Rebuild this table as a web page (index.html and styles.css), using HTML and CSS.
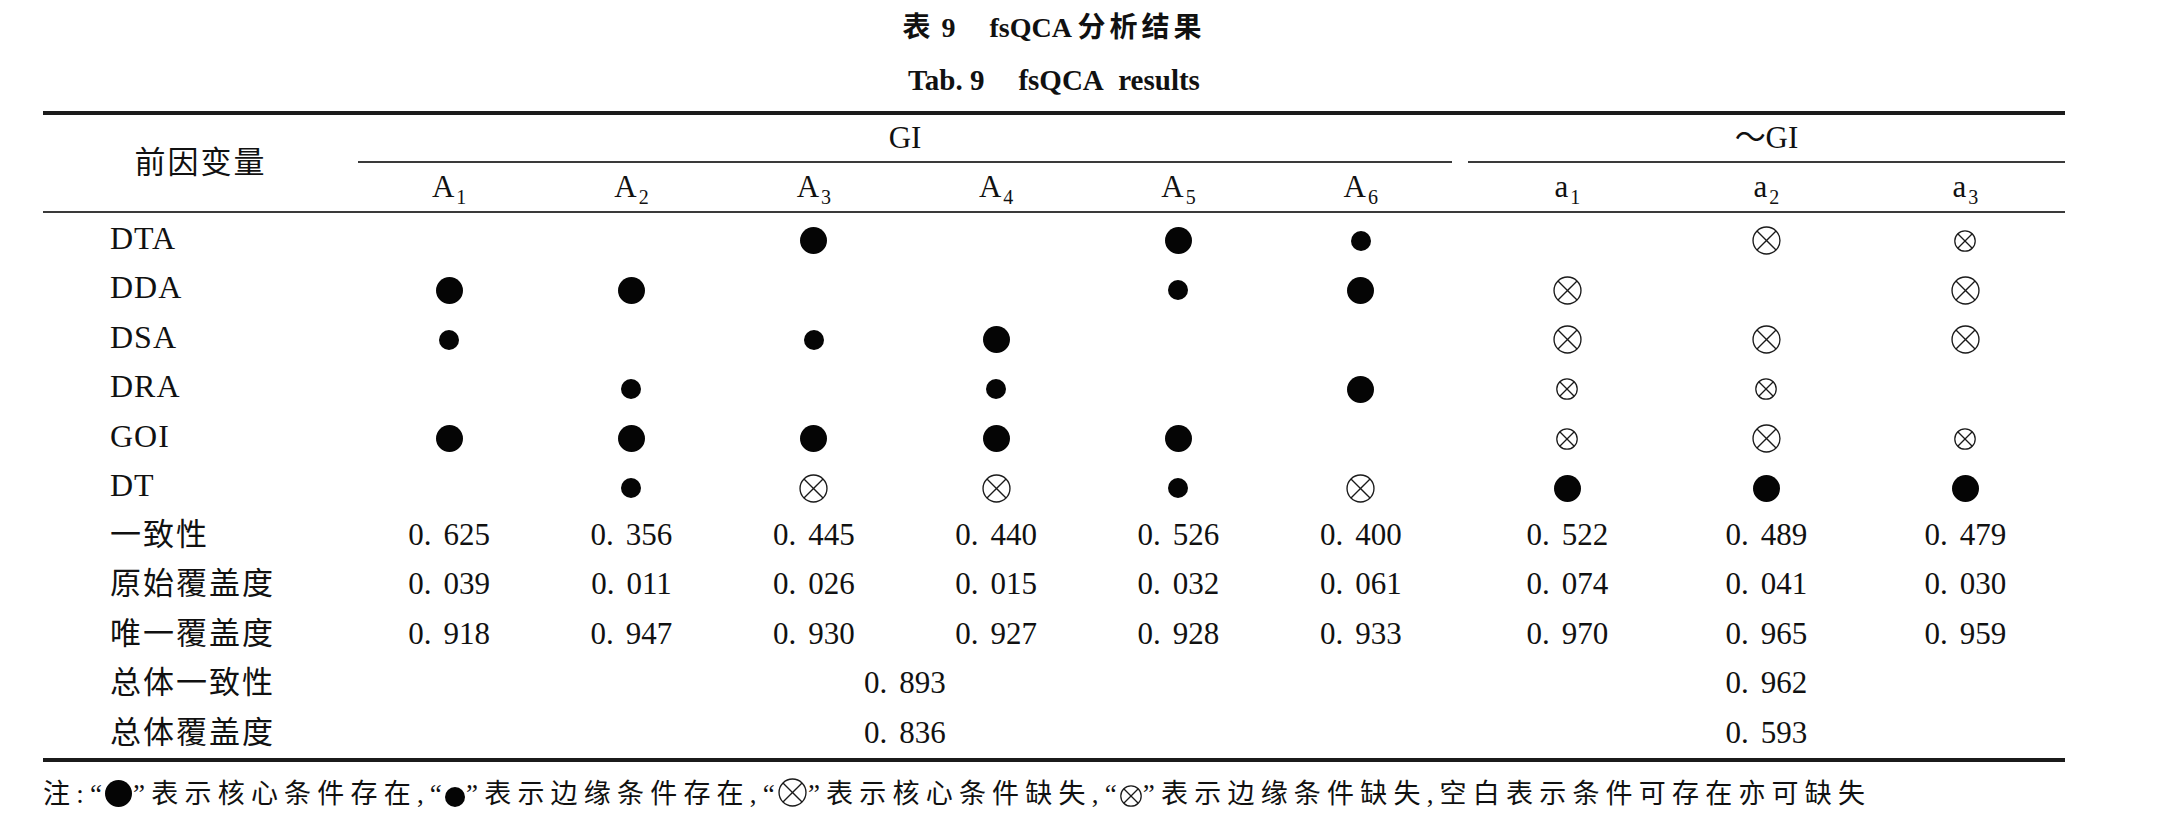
FILE: index.html
```html
<!DOCTYPE html>
<html lang="zh-CN">
<head>
<meta charset="utf-8">
<title>表 9 fsQCA 分析结果</title>
<link rel="stylesheet" href="styles.css">
</head>
<body>
<div class="page">
  <div class="caption">
    <div class="title-cn"><span class="t-cjk">表</span> 9<span class="t-gap"></span>fsQCA <span class="t-cjk">分析结果</span></div>
    <div class="title-en">Tab. 9<span class="t-gap"></span>fsQCA&nbsp; results</div>
  </div>

  <table class="qca">
    <colgroup>
      <col class="c-label">
      <col class="c-gi"><col class="c-gi"><col class="c-gi"><col class="c-gi"><col class="c-gi"><col class="c-gi">
      <col class="c-sep">
      <col class="c-ngi"><col class="c-ngi"><col class="c-ngi">
    </colgroup>
    <thead>
      <tr class="h1">
        <th rowspan="2" class="var">前因变量</th>
        <th colspan="6" class="grp">GI</th>
        <th class="sep"></th>
        <th colspan="3" class="grp">～GI</th>
      </tr>
      <tr class="h2">
        <th>A<sub>1</sub></th><th>A<sub>2</sub></th><th>A<sub>3</sub></th><th>A<sub>4</sub></th><th>A<sub>5</sub></th><th>A<sub>6</sub></th>
        <th class="sep"></th>
        <th>a<sub>1</sub></th><th>a<sub>2</sub></th><th>a<sub>3</sub></th>
      </tr>
    </thead>
    <tbody>
      <tr>
        <td class="lbl lat">DTA</td>
        <td></td><td></td><td><span class="dot dot-l"></span></td><td></td><td><span class="dot dot-l"></span></td><td><span class="dot dot-s"></span></td>
        <td class="sep"></td>
        <td></td>
        <td><svg class="ox ox-l" viewBox="0 0 28 28"><circle cx="14" cy="14" r="13"/><line x1="4.8" y1="4.8" x2="23.2" y2="23.2"/><line x1="23.2" y1="4.8" x2="4.8" y2="23.2"/></svg></td>
        <td><svg class="ox ox-s" viewBox="0 0 28 28"><circle cx="14" cy="14" r="13"/><line x1="4.8" y1="4.8" x2="23.2" y2="23.2"/><line x1="23.2" y1="4.8" x2="4.8" y2="23.2"/></svg></td>
      </tr>
      <tr>
        <td class="lbl lat">DDA</td>
        <td><span class="dot dot-l"></span></td><td><span class="dot dot-l"></span></td><td></td><td></td><td><span class="dot dot-s"></span></td><td><span class="dot dot-l"></span></td>
        <td class="sep"></td>
        <td><svg class="ox ox-l" viewBox="0 0 28 28"><circle cx="14" cy="14" r="13"/><line x1="4.8" y1="4.8" x2="23.2" y2="23.2"/><line x1="23.2" y1="4.8" x2="4.8" y2="23.2"/></svg></td>
        <td></td>
        <td><svg class="ox ox-l" viewBox="0 0 28 28"><circle cx="14" cy="14" r="13"/><line x1="4.8" y1="4.8" x2="23.2" y2="23.2"/><line x1="23.2" y1="4.8" x2="4.8" y2="23.2"/></svg></td>
      </tr>
      <tr>
        <td class="lbl lat">DSA</td>
        <td><span class="dot dot-s"></span></td><td></td><td><span class="dot dot-s"></span></td><td><span class="dot dot-l"></span></td><td></td><td></td>
        <td class="sep"></td>
        <td><svg class="ox ox-l" viewBox="0 0 28 28"><circle cx="14" cy="14" r="13"/><line x1="4.8" y1="4.8" x2="23.2" y2="23.2"/><line x1="23.2" y1="4.8" x2="4.8" y2="23.2"/></svg></td>
        <td><svg class="ox ox-l" viewBox="0 0 28 28"><circle cx="14" cy="14" r="13"/><line x1="4.8" y1="4.8" x2="23.2" y2="23.2"/><line x1="23.2" y1="4.8" x2="4.8" y2="23.2"/></svg></td>
        <td><svg class="ox ox-l" viewBox="0 0 28 28"><circle cx="14" cy="14" r="13"/><line x1="4.8" y1="4.8" x2="23.2" y2="23.2"/><line x1="23.2" y1="4.8" x2="4.8" y2="23.2"/></svg></td>
      </tr>
      <tr>
        <td class="lbl lat">DRA</td>
        <td></td><td><span class="dot dot-s"></span></td><td></td><td><span class="dot dot-s"></span></td><td></td><td><span class="dot dot-l"></span></td>
        <td class="sep"></td>
        <td><svg class="ox ox-s" viewBox="0 0 28 28"><circle cx="14" cy="14" r="13"/><line x1="4.8" y1="4.8" x2="23.2" y2="23.2"/><line x1="23.2" y1="4.8" x2="4.8" y2="23.2"/></svg></td>
        <td><svg class="ox ox-s" viewBox="0 0 28 28"><circle cx="14" cy="14" r="13"/><line x1="4.8" y1="4.8" x2="23.2" y2="23.2"/><line x1="23.2" y1="4.8" x2="4.8" y2="23.2"/></svg></td>
        <td></td>
      </tr>
      <tr>
        <td class="lbl lat">GOI</td>
        <td><span class="dot dot-l"></span></td><td><span class="dot dot-l"></span></td><td><span class="dot dot-l"></span></td><td><span class="dot dot-l"></span></td><td><span class="dot dot-l"></span></td><td></td>
        <td class="sep"></td>
        <td><svg class="ox ox-s" viewBox="0 0 28 28"><circle cx="14" cy="14" r="13"/><line x1="4.8" y1="4.8" x2="23.2" y2="23.2"/><line x1="23.2" y1="4.8" x2="4.8" y2="23.2"/></svg></td>
        <td><svg class="ox ox-l" viewBox="0 0 28 28"><circle cx="14" cy="14" r="13"/><line x1="4.8" y1="4.8" x2="23.2" y2="23.2"/><line x1="23.2" y1="4.8" x2="4.8" y2="23.2"/></svg></td>
        <td><svg class="ox ox-s" viewBox="0 0 28 28"><circle cx="14" cy="14" r="13"/><line x1="4.8" y1="4.8" x2="23.2" y2="23.2"/><line x1="23.2" y1="4.8" x2="4.8" y2="23.2"/></svg></td>
      </tr>
      <tr>
        <td class="lbl lat">DT</td>
        <td></td><td><span class="dot dot-s"></span></td>
        <td><svg class="ox ox-l" viewBox="0 0 28 28"><circle cx="14" cy="14" r="13"/><line x1="4.8" y1="4.8" x2="23.2" y2="23.2"/><line x1="23.2" y1="4.8" x2="4.8" y2="23.2"/></svg></td>
        <td><svg class="ox ox-l" viewBox="0 0 28 28"><circle cx="14" cy="14" r="13"/><line x1="4.8" y1="4.8" x2="23.2" y2="23.2"/><line x1="23.2" y1="4.8" x2="4.8" y2="23.2"/></svg></td>
        <td><span class="dot dot-s"></span></td>
        <td><svg class="ox ox-l" viewBox="0 0 28 28"><circle cx="14" cy="14" r="13"/><line x1="4.8" y1="4.8" x2="23.2" y2="23.2"/><line x1="23.2" y1="4.8" x2="4.8" y2="23.2"/></svg></td>
        <td class="sep"></td>
        <td><span class="dot dot-l"></span></td><td><span class="dot dot-l"></span></td><td><span class="dot dot-l"></span></td>
      </tr>
      <tr class="num">
        <td class="lbl">一致性</td>
        <td>0<span class="pt">.</span>625</td><td>0<span class="pt">.</span>356</td><td>0<span class="pt">.</span>445</td><td>0<span class="pt">.</span>440</td><td>0<span class="pt">.</span>526</td><td>0<span class="pt">.</span>400</td>
        <td class="sep"></td>
        <td>0<span class="pt">.</span>522</td><td>0<span class="pt">.</span>489</td><td>0<span class="pt">.</span>479</td>
      </tr>
      <tr class="num">
        <td class="lbl">原始覆盖度</td>
        <td>0<span class="pt">.</span>039</td><td>0<span class="pt">.</span>011</td><td>0<span class="pt">.</span>026</td><td>0<span class="pt">.</span>015</td><td>0<span class="pt">.</span>032</td><td>0<span class="pt">.</span>061</td>
        <td class="sep"></td>
        <td>0<span class="pt">.</span>074</td><td>0<span class="pt">.</span>041</td><td>0<span class="pt">.</span>030</td>
      </tr>
      <tr class="num">
        <td class="lbl">唯一覆盖度</td>
        <td>0<span class="pt">.</span>918</td><td>0<span class="pt">.</span>947</td><td>0<span class="pt">.</span>930</td><td>0<span class="pt">.</span>927</td><td>0<span class="pt">.</span>928</td><td>0<span class="pt">.</span>933</td>
        <td class="sep"></td>
        <td>0<span class="pt">.</span>970</td><td>0<span class="pt">.</span>965</td><td>0<span class="pt">.</span>959</td>
      </tr>
      <tr class="num">
        <td class="lbl">总体一致性</td>
        <td colspan="6">0<span class="pt">.</span>893</td>
        <td class="sep"></td>
        <td colspan="3">0<span class="pt">.</span>962</td>
      </tr>
      <tr class="num">
        <td class="lbl">总体覆盖度</td>
        <td colspan="6">0<span class="pt">.</span>836</td>
        <td class="sep"></td>
        <td colspan="3">0<span class="pt">.</span>593</td>
      </tr>
    </tbody>
  </table>

  <p class="note">注:“<span class="dot dot-l"></span>”表示核心条件存在,“<span class="dot dot-s"></span>”表示边缘条件存在,“<svg class="ox ox-l" viewBox="0 0 28 28"><circle cx="14" cy="14" r="13"/><line x1="4.8" y1="4.8" x2="23.2" y2="23.2"/><line x1="23.2" y1="4.8" x2="4.8" y2="23.2"/></svg>”表示核心条件缺失,“<svg class="ox ox-s" viewBox="0 0 28 28"><circle cx="14" cy="14" r="13"/><line x1="4.8" y1="4.8" x2="23.2" y2="23.2"/><line x1="23.2" y1="4.8" x2="4.8" y2="23.2"/></svg>”表示边缘条件缺失,空白表示条件可存在亦可缺失</p>
</div>
</body>
</html>
```

FILE: styles.css
```css
* {
  box-sizing: border-box;
}

html,
body {
  margin: 0;
  padding: 0;
  background: #ffffff;
}

body {
  color: #111111;
  font-family: "Liberation Serif", "Noto Sans CJK SC", serif;
}

.page {
  width: 2164px;
  padding-left: 43px;
}

/* ---------- caption ---------- */
.caption {
  width: 2022px;
  padding-top: 8px;
  margin-bottom: 11px;
  text-align: center;
  font-weight: 700;
}

.title-cn {
  font-size: 28px;
  line-height: 40px;
  height: 40px;
}

.title-cn .t-cjk {
  letter-spacing: 4px;
}

.title-en {
  margin-top: 12px;
  font-size: 29px;
  line-height: 40px;
  height: 40px;
}

.t-gap {
  display: inline-block;
  width: 34px;
}

/* ---------- table ---------- */
.qca {
  width: 2022px;
  table-layout: fixed;
  border-collapse: separate;
  border-spacing: 0;
  border-top: 4px solid #1b1b1b;
  border-bottom: 4px solid #1b1b1b;
  font-size: 31px;
  line-height: 36px;
}

col.c-label { width: 315px; }
col.c-gi { width: 182.33px; }
col.c-sep { width: 16px; }
col.c-ngi { width: 199px; }

.qca th,
.qca td {
  padding: 0;
  font-weight: 400;
  text-align: center;
  vertical-align: middle;
  white-space: nowrap;
}

.h1 th {
  height: 48px;
}

.h1 th.grp {
  border-bottom: 2px solid #3a3a3a;
}

.h1 th.var {
  border-bottom: 2px solid #3a3a3a;
  letter-spacing: 2px;
}

.h2 th {
  height: 50px;
  border-bottom: 2px solid #3a3a3a;
}

.qca sub {
  font-size: 20px;
  line-height: 0;
  vertical-align: -7px;
  margin-left: 2px;
}

.qca tbody td {
  height: 49.5px;
}

.qca td.lbl {
  text-align: left;
  padding-left: 67px;
  letter-spacing: 2px;
}

.qca td.lat {
  font-size: 32px;
  letter-spacing: 1px;
}

.pt {
  letter-spacing: 12px;
}

/* ---------- symbols ---------- */
.dot {
  display: inline-block;
  border-radius: 50%;
  background: #050505;
  vertical-align: middle;
}

.dot-l {
  width: 27px;
  height: 27px;
}

.dot-s {
  width: 20px;
  height: 20px;
}

.ox {
  display: inline-block;
  vertical-align: middle;
  fill: none;
  stroke: #1a1a1a;
  stroke-width: 1.3;
}

.ox-l {
  width: 29px;
  height: 29px;
}

.ox-s {
  width: 22px;
  height: 22px;
  stroke-width: 1.6;
}

/* ---------- note ---------- */
.note {
  margin: 12px 0 0;
  font-size: 27px;
  line-height: 40px;
  letter-spacing: 6.2px;
  white-space: nowrap;
}

.note .dot,
.note .ox {
  margin: 0 1px 0 -3px;
  vertical-align: -4px;
}
```
